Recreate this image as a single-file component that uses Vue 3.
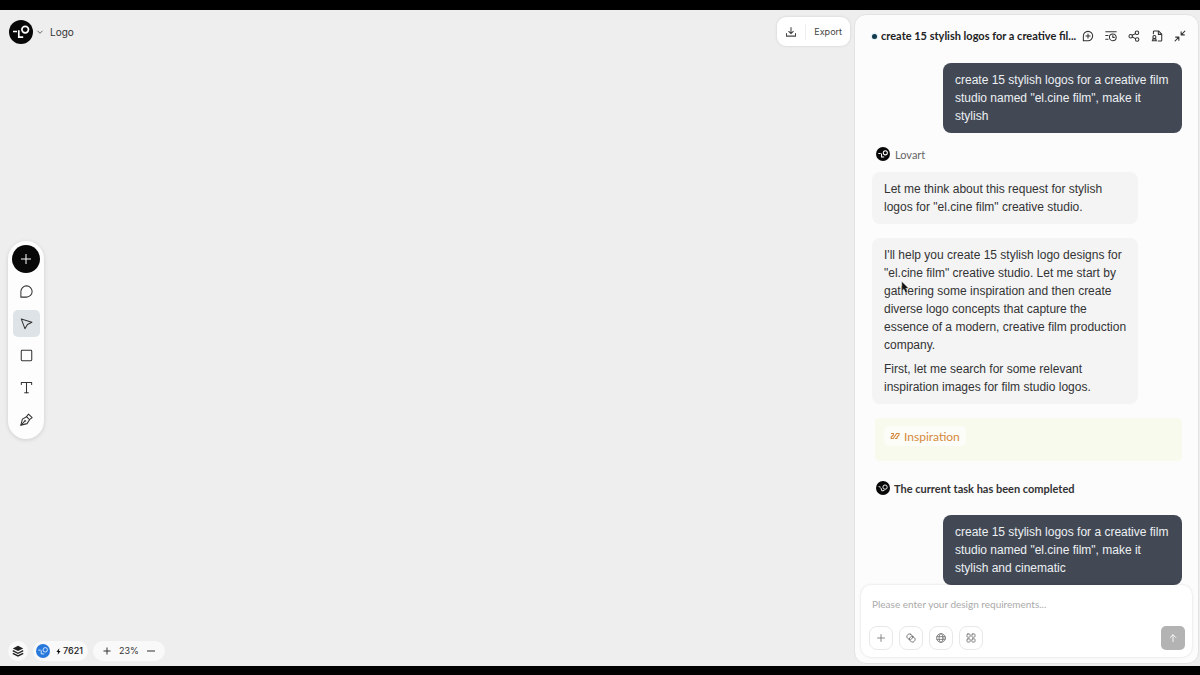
<script setup>
import { ref } from 'vue'

const draft = ref('')
const activeTool = ref('Select')
const tools = [
  { name: 'Comment', paths: ['M2 14V8A6 6 0 1 1 8 14Z'] },
  { name: 'Select', paths: ['M2.4 3.1 13.8 6.6 9 9 6.3 13.5Z'] },
  { name: 'Shape', paths: ['M3.4 2.5h9.2a1 1 0 0 1 1 1v9a1 1 0 0 1-1 1H3.4a1 1 0 0 1-1-1v-9a1 1 0 0 1 1-1Z'] },
  { name: 'Text', paths: ['M2.5 4.8V2.7h11v2.1', 'M8 2.7v10.8', 'M6 13.5h4'] },
  { name: 'Pen', paths: ['M2 14 3.6 7.6 8 5l3.2 3.2L8.6 12.4Z', 'M2 14l4.2-4.2', 'M8 5l2.2-2.8 3.8 3.8-2.8 2.2', 'M6.2 8.8l1 1'] },
]
</script>

<template>
  <div class="screen">
    <main class="workspace">
      <section class="canvas" aria-label="Canvas">
        <header class="topbar">
          <button class="project" type="button">
            <svg class="logo large" viewBox="0 0 24 24" aria-hidden="true"><circle cx="12" cy="12" r="12" fill="#080808" /><path d="M4 11.5h4M9.8 10.2v7h4.4" fill="none" stroke="#fff" stroke-width="1.7" /><circle cx="16.2" cy="9.6" r="3.3" fill="none" stroke="#fff" stroke-width="1.7" /></svg>
            <svg class="chevron" viewBox="0 0 8 8" aria-hidden="true"><path d="m1.5 2.8 2.5 2.5 2.5-2.5" /></svg>
            <span>Logo</span>
          </button>
          <button class="export" type="button">
            <svg class="icon" viewBox="0 0 16 16" aria-hidden="true"><path d="M8 2v8M5 7.3 8 10.3l3-3M2 10v3.5h12V10" /></svg>
            <span>Export</span>
          </button>
        </header>

        <nav class="tools" aria-label="Tools">
          <button class="add" type="button" aria-label="Add">
            <svg viewBox="0 0 12 12" aria-hidden="true"><path d="M6 1v10M1 6h10" /></svg>
          </button>
          <button
            v-for="tool in tools" :key="tool.name" type="button" class="tool"
            :class="{ active: activeTool === tool.name }" :aria-label="tool.name"
            @click="activeTool = tool.name"
          >
            <svg class="icon" viewBox="0 0 16 16" aria-hidden="true"><path v-for="d in tool.paths" :key="d" :d="d" /></svg>
          </button>
        </nav>

        <footer class="status">
          <button class="layers" type="button" aria-label="Layers">
            <svg viewBox="0 0 12 12" aria-hidden="true"><path d="M6 .8 11.2 3.4 6 6 .8 3.4Z" fill="#222" /><path d="M.8 5.7 6 8.3l5.2-2.6M.8 8.3 6 10.9l5.2-2.6" fill="none" stroke="#222" stroke-width="1.4" /></svg>
          </button>
          <button class="credits" type="button">
            <svg class="logo" viewBox="0 0 24 24" aria-hidden="true"><circle cx="12" cy="12" r="12" fill="#2878dc" /><path d="M4 10.5h4M9 11v6h5" fill="none" stroke="#d8ecff" stroke-width="1.6" /><circle cx="15.8" cy="10" r="3.8" fill="none" stroke="#d8ecff" stroke-width="1.6" /></svg>
            <svg class="bolt" viewBox="0 0 6 8" aria-hidden="true"><path d="M3.9 0 .5 4.5h2L2 8l3.5-4.6h-2Z" /></svg>
            <span>7621</span>
          </button>
          <div class="zoom">
            <button type="button" aria-label="Zoom in"><svg viewBox="0 0 8 8" aria-hidden="true"><path d="M4 .5v7M.5 4h7" /></svg></button>
            <span>23%</span>
            <button type="button" aria-label="Zoom out"><svg viewBox="0 0 8 8" aria-hidden="true"><path d="M0 4h8" /></svg></button>
          </div>
        </footer>
      </section>

      <aside class="panel">
        <header class="chat-head">
          <i class="dot"></i>
          <h1>create 15 stylish logos for a creative fil...</h1>
          <div class="actions">
            <button type="button" aria-label="New chat"><svg class="icon" viewBox="0 0 16 16" aria-hidden="true"><path d="M1.8 14.2V8A6.2 6.2 0 1 1 8 14.2ZM8 5.2v5.6M5.2 8h5.6" /></svg></button>
            <button type="button" aria-label="History"><svg class="icon" viewBox="0 0 16 16" aria-hidden="true"><path d="M1 2.2h14M1 7.2h3M1 12.4h3M10.4 7.4v2.4h2" /><circle cx="10.4" cy="9.7" r="4.5" /></svg></button>
            <button type="button" aria-label="Share"><svg class="icon" viewBox="0 0 16 16" aria-hidden="true"><circle cx="3.6" cy="8.3" r="2.3" /><circle cx="12" cy="3.6" r="2.3" /><circle cx="12.2" cy="12.6" r="2.3" /><path d="m5.7 7.1 4.2-2.3M5.7 9.4l4.4 2.1" /></svg></button>
            <button type="button" aria-label="Files"><svg class="icon" viewBox="0 0 16 16" aria-hidden="true"><path d="M3.2 5V2.5a1.2 1.2 0 0 1 1.2-1.2H10l4.3 4.2v8a1.2 1.2 0 0 1-1.2 1.2H9.6M9.8 1.6v4.2H14M1.6 14.3h5.8M2.4 14v-2.2h4.2V14" /><circle cx="4.5" cy="9.3" r="2" /></svg></button>
            <button type="button" aria-label="Collapse"><svg class="icon" viewBox="0 0 16 16" aria-hidden="true"><path d="M14.5 1.5 9.5 6.5M9.5 2.2v4.3h4.3M1.5 14.5l5-5M2.2 9.5h4.3v4.3" /></svg></button>
          </div>
        </header>

        <div class="messages">
          <p class="bubble">create 15 stylish logos for a creative film studio named "el.cine film", make it stylish</p>
          <div class="author">
            <svg class="logo" viewBox="0 0 24 24" aria-hidden="true"><circle cx="12" cy="12" r="12" fill="#080808" /><path d="M4 11h4M9.5 11v6h4.5" fill="none" stroke="#fff" stroke-width="1.8" /><circle cx="16" cy="10" r="3.5" fill="none" stroke="#fff" stroke-width="1.8" /></svg>
            <span>Lovart</span>
          </div>
          <div class="reply"><p>Let me think about this request for stylish logos for "el.cine film" creative studio.</p></div>
          <div class="reply">
            <p>I'll help you create 15 stylish logo designs for "el.cine film" creative studio. Let me start by gathering some inspiration and then create diverse logo concepts that capture the essence of a modern, creative film production company.</p>
            <p>First, let me search for some relevant inspiration images for film studio logos.</p>
            <svg class="pointer" viewBox="0 0 9 14" aria-hidden="true"><path d="M.5.5v10l2.2-2 1.8 4 2-.9-1.7-3.7h3Z" /></svg>
          </div>
          <div class="inspiration">
            <button type="button">
              <svg viewBox="0 0 10 8" aria-hidden="true"><path d="M1 1.5h2.4v1.4L1.2 5v1.5h2L6.6 1.5H9v1.6L7 5v1.5H5" /></svg>
              <span>Inspiration</span>
            </button>
          </div>
          <div class="done">
            <svg class="logo" viewBox="0 0 24 24" aria-hidden="true"><circle cx="12" cy="12" r="12" fill="#080808" /><path d="M4.5 9.5l3.5 1.2M8.5 12l1.5 5 4.5-1" fill="none" stroke="#fff" stroke-width="1.6" /><circle cx="15.5" cy="10.5" r="3.7" fill="none" stroke="#fff" stroke-width="1.6" /></svg>
            <span>The current task has been completed</span>
          </div>
          <p class="bubble">create 15 stylish logos for a creative film studio named "el.cine film", make it stylish and cinematic</p>
        </div>

        <form class="composer" @submit.prevent>
          <textarea v-model="draft" rows="1" aria-label="Design requirements" placeholder="Please enter your design requirements..."></textarea>
          <div class="composer-row">
            <button type="button" aria-label="Attach"><svg class="icon" viewBox="0 0 16 16" aria-hidden="true"><path d="M8 2.5v11M2.5 8h11" /></svg></button>
            <button type="button" aria-label="Link"><svg class="icon" viewBox="0 0 16 16" aria-hidden="true"><rect x="1.5" y="2" width="9" height="8" rx="3.2" transform="rotate(35 6 6)" /><rect x="5.5" y="6" width="9" height="8" rx="3.2" transform="rotate(35 10 10)" /></svg></button>
            <button type="button" aria-label="Web search"><svg class="icon" viewBox="0 0 16 16" aria-hidden="true"><circle cx="8" cy="8" r="7" /><ellipse cx="8" cy="8" rx="3.2" ry="7" /><path d="M1.5 5.8h13M1.5 10.2h13" /></svg></button>
            <button type="button" aria-label="Apps"><svg class="icon" viewBox="0 0 16 16" aria-hidden="true"><rect x="1.5" y="1.5" width="5.2" height="5.2" rx="1.5" /><rect x="9.3" y="1.5" width="5.2" height="5.2" rx="1.5" /><rect x="1.5" y="9.3" width="5.2" height="5.2" rx="1.5" /><rect x="9.3" y="9.3" width="5.2" height="5.2" rx="1.5" /></svg></button>
            <button class="send" type="submit" aria-label="Send"><svg class="icon" viewBox="0 0 16 16" aria-hidden="true"><path d="M8 14V3M3.5 7.2 8 2.7l4.5 4.5" /></svg></button>
          </div>
        </form>
      </aside>
    </main>
  </div>
</template>

<style>
body { background: #000; }
</style>

<style scoped>
* { box-sizing: border-box; }
.screen { height: 100vh; padding: 10px 0 9px; background: #000; font-family: "Liberation Sans", Arial, sans-serif; font-size: 12px; color: #333; }
.workspace { height: 100%; display: flex; background: #eeeeef; }
button { border: 0; padding: 0; margin: 0; background: none; color: inherit; font: inherit; display: flex; align-items: center; justify-content: center; cursor: pointer; }
svg { display: block; flex: none; }
.icon { width: 12px; height: 12px; fill: none; stroke: currentColor; stroke-width: 1.4; stroke-linecap: round; stroke-linejoin: round; }
.logo { width: 14px; height: 14px; }
.logo.large { width: 24px; height: 24px; }

.canvas { flex: 1; min-width: 0; display: flex; flex-direction: column; align-items: flex-start; justify-content: space-between; padding: 7px 4px 5px 8px; }
.topbar { width: 100%; display: flex; align-items: center; justify-content: space-between; }
.project { font-family: Inter, sans-serif; font-size: 10px; padding-left: 1px; }
.chevron { width: 8px; height: 8px; margin: 0 6px 0 3px; fill: none; stroke: #666; }
.export { height: 29px; padding: 0 8px; gap: 8px; border-radius: 9px; background: #fff; box-shadow: 0 0 3px #0002; font-family: Inter, sans-serif; font-size: 9px; color: #444; }
.export span { padding-left: 8px; border-left: 1px solid #eee; line-height: 16px; }

.tools { width: 36px; margin-bottom: 7px; padding: 4px 0 6px; display: flex; flex-direction: column; align-items: center; gap: 5px; border-radius: 18px; background: #fdfdfd; box-shadow: 0 1px 4px #0002; }
.add { width: 28px; height: 28px; border-radius: 50%; background: #080808; }
.add svg { width: 12px; height: 12px; fill: none; stroke: #fff; }
.tool { width: 27px; height: 27px; border-radius: 5px; color: #333; }
.tool .icon { width: 15px; height: 15px; stroke-width: 1.1; }
.tool.active { background: #dde3e6; }

.status { display: flex; gap: 5px; font-family: Inter, sans-serif; font-size: 9px; line-height: 20px; }
.status > * { height: 20px; border-radius: 10px; background: #f9f9fa; }
.layers { width: 20px; }
.layers svg { width: 12px; height: 12px; }
.credits { padding: 0 5px 0 3px; font-weight: 500; color: #222; }
.bolt { width: 5px; height: 7px; margin: 0 2px 0 6px; fill: #111; }
.zoom { display: flex; align-items: center; gap: 8px; padding: 0 10px; }
.zoom svg { width: 8px; height: 8px; stroke: #333; stroke-width: 1; }

.panel { width: 345px; margin: 4px 1px 2px 0; display: flex; flex-direction: column; background: #fcfcfd; border: 1px solid #e3e3e6; border-radius: 12px; overflow: hidden; }
.chat-head { height: 42px; flex: none; display: flex; align-items: center; padding: 0 12px 0 17px; }
.dot { width: 5px; height: 5px; flex: none; border-radius: 50%; background: #123a4c; box-shadow: 0 0 2px #8fc4d0; }
h1 { flex: 1; min-width: 0; margin: 0 0 0 4px; font-family: Lato, sans-serif; font-size: 11px; font-weight: 700; line-height: 16px; white-space: nowrap; color: #222; }
.actions { display: flex; gap: 11px; color: #333; }

.messages { flex: 1; min-height: 0; display: flex; flex-direction: column; align-items: flex-start; padding: 6px 16px 0 17px; overflow: hidden; }
.messages > * { flex: none; }
p { margin: 0; line-height: 18px; }
.bubble { align-self: flex-end; width: 239px; padding: 8px 8px 8px 12px; border-radius: 8px; background: #424955; color: #edf0f3; }
.author { display: flex; align-items: center; gap: 5px; height: 14px; margin: 14px 0 11px 4px; font-family: Lato, sans-serif; font-size: 11px; color: #666; }
.reply { position: relative; width: 266px; padding: 8px 8px 8px 12px; border-radius: 8px; background: #f4f4f5; color: #333; }
.reply + .reply { margin-top: 14px; }
.reply p + p { margin-top: 6px; }
.pointer { position: absolute; left: 29px; top: 43px; width: 9px; height: 13px; fill: #111; stroke: #eee; stroke-width: .4; }
.inspiration { align-self: stretch; height: 43px; margin: 14px 0 0 3px; padding: 8px 9px; background: #f9faee; border-radius: 4px; }
.inspiration button { height: 20px; gap: 4px; padding: 0 6px; border-radius: 5px; background: #fcfcf8; font-family: Lato, sans-serif; font-size: 12px; color: #d58a3c; }
.inspiration svg { width: 10px; height: 8px; fill: none; stroke: #d58a3c; stroke-width: 1.1; }
.done { display: flex; align-items: center; gap: 4px; height: 14px; margin: 20px 0 20px 4px; font-family: Lato, sans-serif; font-size: 11px; font-weight: 700; color: #333; }

.composer { flex: none; margin: 0 6px 6px; padding: 11px 7px 7px 8px; border-radius: 10px; background: #fff; box-shadow: 0 0 3px #0002; }
textarea { display: block; width: 100%; height: 16px; margin: 0 0 14px; padding: 0 3px; border: 0; outline: 0; resize: none; background: transparent; overflow: hidden; font-family: Lato, sans-serif; font-size: 10px; line-height: 16px; }
textarea::placeholder { color: #aaa; opacity: 1; }
.composer-row { display: flex; gap: 6px; }
.composer-row button { width: 24px; height: 24px; border: 1px solid #e8e8e9; border-radius: 8px; color: #777; }
.composer-row .icon { width: 10px; height: 10px; }
.composer-row .send { margin-left: auto; border: 0; border-radius: 5px; background: #b3b3b3; color: #fff; }
</style>
